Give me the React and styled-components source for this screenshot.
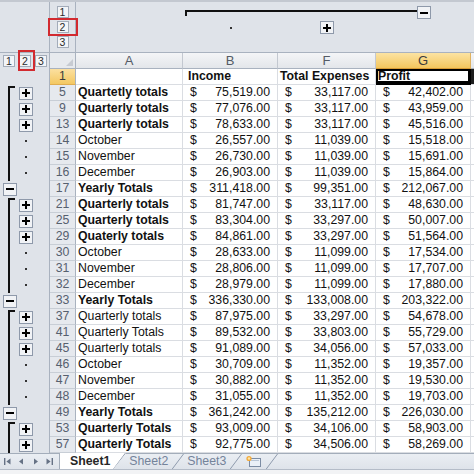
import React from 'react';
import styled, { createGlobalStyle, css } from 'styled-components';

const GlobalStyle = createGlobalStyle`
  html, body { margin: 0; padding: 0; background: #ffffff; }
  body { font-family: "Liberation Sans", Arial, sans-serif; }
`;

// gutter | row head | A | B | F | G | rest
const COLS = '50px 26px 107px 95px 98px 95px 1fr';

const GRID = '#dadde2';
const FRAME = '#a9b2bf';
const PANEL = '#dfe3e9';

const rows = [
  { n: 5, a: 'Quartetly totals', bold: true, b: '75,519.00', f: '33,117.00', g: '42,402.00', l1: 'start', l2: 'plus' },
  { n: 9, a: 'Quarterly totals', bold: true, b: '77,076.00', f: '33,117.00', g: '43,959.00', l1: 'line', l2: 'plus' },
  { n: 13, a: 'Quarterly totals', bold: true, b: '78,633.00', f: '33,117.00', g: '45,516.00', l1: 'line', l2: 'plus' },
  { n: 14, a: 'October', b: '26,557.00', f: '11,039.00', g: '15,518.00', l1: 'line', l2: 'dot' },
  { n: 15, a: 'November', b: '26,730.00', f: '11,039.00', g: '15,691.00', l1: 'line', l2: 'dot' },
  { n: 16, a: 'December', b: '26,903.00', f: '11,039.00', g: '15,864.00', l1: 'line', l2: 'dot' },
  { n: 17, a: 'Yearly Totals', bold: true, b: '311,418.00', f: '99,351.00', g: '212,067.00', l1: 'minus' },
  { n: 21, a: 'Quarterly totals', bold: true, b: '81,747.00', f: '33,117.00', g: '48,630.00', l1: 'start', l2: 'plus' },
  { n: 25, a: 'Quarterly totals', bold: true, b: '83,304.00', f: '33,297.00', g: '50,007.00', l1: 'line', l2: 'plus' },
  { n: 29, a: 'Quaterly totals', bold: true, b: '84,861.00', f: '33,297.00', g: '51,564.00', l1: 'line', l2: 'plus' },
  { n: 30, a: 'October', b: '28,633.00', f: '11,099.00', g: '17,534.00', l1: 'line', l2: 'dot' },
  { n: 31, a: 'November', b: '28,806.00', f: '11,099.00', g: '17,707.00', l1: 'line', l2: 'dot' },
  { n: 32, a: 'December', b: '28,979.00', f: '11,099.00', g: '17,880.00', l1: 'line', l2: 'dot' },
  { n: 33, a: 'Yearly Totals', bold: true, b: '336,330.00', f: '133,008.00', g: '203,322.00', l1: 'minus' },
  { n: 37, a: 'Quarterly totals', b: '87,975.00', f: '33,297.00', g: '54,678.00', l1: 'start', l2: 'plus' },
  { n: 41, a: 'Quarterly Totals', b: '89,532.00', f: '33,803.00', g: '55,729.00', l1: 'line', l2: 'plus' },
  { n: 45, a: 'Quarterly totals', b: '91,089.00', f: '34,056.00', g: '57,033.00', l1: 'line', l2: 'plus' },
  { n: 46, a: 'October', b: '30,709.00', f: '11,352.00', g: '19,357.00', l1: 'line', l2: 'dot' },
  { n: 47, a: 'November', b: '30,882.00', f: '11,352.00', g: '19,530.00', l1: 'line', l2: 'dot' },
  { n: 48, a: 'December', b: '31,055.00', f: '11,352.00', g: '19,703.00', l1: 'line', l2: 'dot' },
  { n: 49, a: 'Yearly Totals', bold: true, b: '361,242.00', f: '135,212.00', g: '226,030.00', l1: 'minus' },
  { n: 53, a: 'Quarterly Totals', bold: true, b: '93,009.00', f: '34,106.00', g: '58,903.00', l1: 'start', l2: 'plus' },
  { n: 57, a: 'Quarterly Totals', bold: true, b: '92,775.00', f: '34,506.00', g: '58,269.00', l1: 'line', l2: 'plus' }
];

const Screen = styled.div`
  width: 474px;
  height: 474px;
  overflow: hidden;
  display: flex;
  flex-direction: column;
  background: #fff;
`;

// top outline band (column groups)
const TopBand = styled.div`
  flex: none;
  display: grid;
  grid-template-columns: ${COLS};
  height: 53px;
  box-sizing: border-box;
  background: ${PANEL};
  border-top: 2px solid #c3c8d0;
  border-bottom: 1px solid ${FRAME};
`;

const BandCorner = styled.div`
  border-right: 1px solid ${FRAME};
`;

const LevelStack = styled.div`
  display: flex;
  flex-direction: column;
  align-items: center;
  padding-top: 4px;
  gap: 3px;
  border-right: 1px solid ${FRAME};
`;

const OutlineCol = styled.div`
  display: flex;
  flex-direction: column;
  padding-top: 3px;
`;

const Slot = styled.div`
  height: 15px;
  display: flex;
  align-items: center;
  justify-content: center;
`;

const HBar = styled.span`
  align-self: flex-start;
  flex: 1;
  height: 2px;
  margin-top: 5px;
  margin-left: ${(p) => (p.$hook ? '2px' : '0')};
  background: #111;
  position: relative;
  ${(p) =>
    p.$hook &&
    css`
      &::after {
        content: '';
        position: absolute;
        left: 0;
        top: 0;
        width: 2px;
        height: 6px;
        background: #111;
      }
    `}
`;

const Spacer = styled.span`
  flex: 1;
`;

const LevelBtn = styled.span`
  width: 12px;
  height: 12px;
  box-sizing: border-box;
  border: 1px solid #a3acb9;
  background: #f3f5f8;
  color: #2b2b2b;
  font-size: 10.5px;
  line-height: 10px;
  display: flex;
  align-items: center;
  justify-content: center;
  align-self: center;
  position: relative;
  ${(p) =>
    p.$mark === 'v' &&
    css`
      &::after {
        content: '';
        position: absolute;
        inset: -4px -10px -4px -10px;
        border: 2px solid #d22a2f;
        z-index: 3;
      }
    `}
  ${(p) =>
    p.$mark === 'h' &&
    css`
      &::after {
        content: '';
        position: absolute;
        inset: -6px -5px -5px -2px;
        border: 2px solid #d22a2f;
        z-index: 3;
      }
    `}
`;

const OutlineBtn = styled.span`
  width: 14px;
  height: 13px;
  box-sizing: border-box;
  border: 1px solid #8e99aa;
  background: #f1f3f6;
  display: grid;
  place-items: center;
  flex: none;
  &::before {
    content: '';
    grid-area: 1 / 1;
    width: 8px;
    height: 2px;
    background: #000;
  }
  &::after {
    content: '';
    grid-area: 1 / 1;
    width: 2px;
    height: 8px;
    background: #000;
    display: ${(p) => (p.$kind === 'plus' ? 'block' : 'none')};
  }
`;

const Dot = styled.span`
  width: 2px;
  height: 2px;
  background: #333;
`;

// left outline gutter (row groups)
const Gutter = styled.div`
  display: grid;
  grid-template-columns: 16px 16px 1fr;
  padding-left: ${(p) => (p.$tight ? '1px' : '2px')};
  box-sizing: border-box;
  background: ${PANEL};
  border-right: 1px solid ${FRAME};
`;

const GSlot = styled.div`
  display: flex;
  align-items: center;
  justify-content: center;
`;

const Bracket = styled.span`
  align-self: stretch;
  margin-left: 6px;
  margin-right: auto;
  margin-top: ${(p) => (p.$start ? '1px' : '0')};
  width: 2px;
  background: #111;
  position: relative;
  ${(p) =>
    p.$start &&
    css`
      &::after {
        content: '';
        position: absolute;
        left: 0;
        top: 0;
        width: 7px;
        height: 2px;
        background: #111;
      }
    `}
`;

const Row = styled.div`
  flex: none;
  display: grid;
  grid-template-columns: ${COLS};
  height: 16px;
`;

const SelectAll = styled.div`
  display: flex;
  align-items: flex-end;
  justify-content: flex-end;
  padding: 0 2px 2px 0;
  box-sizing: border-box;
  background: #e7eaee;
  border-right: 1px solid ${FRAME};
  border-bottom: 1px solid ${FRAME};
  &::after {
    content: '';
    border-left: 7px solid transparent;
    border-bottom: 7px solid #c7cbd2;
  }
`;

const ColHead = styled.div`
  box-sizing: border-box;
  text-align: center;
  font-size: 13px;
  line-height: 15px;
  color: #545b66;
  background: linear-gradient(#f4f5f7, #e3e6ea);
  border-right: 1px solid #c3c8d0;
  border-bottom: 1px solid ${FRAME};
  ${(p) =>
    p.$sel &&
    css`
      color: #3b3b3b;
      background: linear-gradient(#fbe3a2, #f4c65e);
      border-bottom-color: #d99c35;
      border-right-color: #e0b260;
    `}
`;

const RowHead = styled.div`
  box-sizing: border-box;
  text-align: center;
  font-size: 12.3px;
  line-height: 15px;
  color: #56606e;
  background: #e6e9ee;
  border-right: 1px solid ${FRAME};
  border-bottom: 1px solid #c8ced6;
  ${(p) =>
    p.$sel &&
    css`
      color: #3b3b3b;
      background: linear-gradient(#fbe0a0, #f4c862);
      border-bottom-color: #e0ad50;
    `}
`;

const Cell = styled.div`
  box-sizing: border-box;
  font-size: 12.3px;
  line-height: 15px;
  color: #111;
  padding: 0 2px 0 ${(p) => p.$indent || 2}px;
  white-space: nowrap;
  overflow: hidden;
  font-weight: ${(p) => (p.$bold ? 700 : 400)};
  border-right: 1px solid ${GRID};
  border-bottom: 1px solid ${GRID};
  ${(p) =>
    p.$active &&
    css`
      box-shadow: inset 0 0 0 2px #000;
      border-right-color: #000;
      border-bottom: 2px solid #000;
    `}
`;

const Money = styled(Cell)`
  display: flex;
  justify-content: space-between;
  padding: 0 7px;
`;

const Tail = styled.div`
  box-sizing: border-box;
  border-bottom: 1px solid ${GRID};
  background: ${(p) => (p.$dark ? '#1d1d1d' : '#fff')};
`;

const TailHead = styled.div`
  background: linear-gradient(#f4f5f7, #e3e6ea);
  border-bottom: 1px solid ${FRAME};
`;

// sheet tabs
const TabBar = styled.div`
  flex: none;
  height: 16px;
  box-sizing: border-box;
  display: flex;
  align-items: stretch;
  background: linear-gradient(#eaeef3, #dee3ea);
  border-top: 1px solid #a3adba;
`;

const NavGroup = styled.div`
  width: 60px;
  flex: none;
  box-sizing: border-box;
  display: flex;
  align-items: center;
  justify-content: space-around;
  padding: 0 3px 0 1px;
  border-right: 1px solid #a3adba;
  color: #667285;
`;

const Tab = styled.div`
  display: flex;
  align-items: stretch;
  padding-left: ${(p) => (p.$first ? 10 : 3)}px;
  font-size: 12.3px;
  line-height: 15px;
  color: ${(p) => (p.$active ? '#262626' : '#74839a')};
  font-weight: ${(p) => (p.$active ? 700 : 400)};
  ${(p) =>
    p.$active &&
    css`
      background: #fff;
      margin-top: -1px;
      clip-path: polygon(0 0, 100% 0, calc(100% - 13px) 100%, 0 100%);
    `}
`;

const TabLabel = styled.span`
  padding-right: 3px;
  display: flex;
  align-items: center;
`;

const StatusStrip = styled.div`
  flex: 1;
  background: #f2f3f5;
  border-top: 1px solid #b4bcc8;
`;

const Slash = () => (
  <svg width="13" height="16" viewBox="0 0 13 16">
    <line x1="0.5" y1="16" x2="12.5" y2="0" stroke="#8f9bad" strokeWidth="1" />
  </svg>
);

const NavIcon = ({ kind }) => (
  <svg width="7" height="7" viewBox="0 0 7 7" fill="currentColor">
    {kind === 'first' && (
      <>
        <rect x="0" y="0" width="1.4" height="7" />
        <path d="M6.5 0.5 L2.4 3.5 L6.5 6.5Z" />
      </>
    )}
    {kind === 'prev' && <path d="M5 0.5 L1 3.5 L5 6.5Z" />}
    {kind === 'next' && <path d="M2 0.5 L6 3.5 L2 6.5Z" />}
    {kind === 'last' && (
      <>
        <path d="M0.5 0.5 L4.6 3.5 L0.5 6.5Z" />
        <rect x="5.6" y="0" width="1.4" height="7" />
      </>
    )}
  </svg>
);

const InsertSheetIcon = () => (
  <svg width="17" height="13" viewBox="0 0 17 13">
    <rect x="4.5" y="3.5" width="11" height="8" fill="#eaf0f7" stroke="#7c8ca3" />
    <rect x="6" y="5" width="8" height="1" fill="#b9c6d6" />
    <circle cx="4" cy="3.5" r="2.6" fill="#f2a93b" />
    <circle cx="4" cy="3.5" r="1.2" fill="#fde7a8" />
  </svg>
);

const Gut = ({ l1, l2 }) => (
  <Gutter>
    <GSlot>
      {(l1 === 'start' || l1 === 'line') && <Bracket $start={l1 === 'start'} />}
      {l1 === 'minus' && <OutlineBtn $kind="minus" />}
    </GSlot>
    <GSlot>
      {l2 === 'plus' && <OutlineBtn $kind="plus" />}
      {l2 === 'dot' && <Dot />}
    </GSlot>
    <GSlot />
  </Gutter>
);

const App = () => {
  return (
    <>
      <GlobalStyle />
      <Screen>
        <TopBand>
          <BandCorner />
          <LevelStack>
            <LevelBtn>1</LevelBtn>
            <LevelBtn $mark="v">2</LevelBtn>
            <LevelBtn>3</LevelBtn>
          </LevelStack>
          <OutlineCol />
          <OutlineCol>
            <Slot>
              <HBar $hook />
            </Slot>
            <Slot>
              <Dot />
            </Slot>
          </OutlineCol>
          <OutlineCol>
            <Slot>
              <HBar />
            </Slot>
            <Slot>
              <OutlineBtn $kind="plus" />
            </Slot>
          </OutlineCol>
          <OutlineCol>
            <Slot>
              <HBar />
              <OutlineBtn $kind="minus" />
              <Spacer />
            </Slot>
          </OutlineCol>
          <OutlineCol />
        </TopBand>

        <Row>
          <Gutter $tight>
            <GSlot>
              <LevelBtn>1</LevelBtn>
            </GSlot>
            <GSlot>
              <LevelBtn $mark="h">2</LevelBtn>
            </GSlot>
            <GSlot>
              <LevelBtn>3</LevelBtn>
            </GSlot>
          </Gutter>
          <SelectAll />
          <ColHead>A</ColHead>
          <ColHead>B</ColHead>
          <ColHead>F</ColHead>
          <ColHead $sel>G</ColHead>
          <TailHead />
        </Row>

        <Row>
          <Gut />
          <RowHead $sel>1</RowHead>
          <Cell />
          <Cell $bold $indent={5}>
            Income
          </Cell>
          <Cell $bold>Total Expenses</Cell>
          <Cell $bold $active>
            Profit
          </Cell>
          <Tail $dark />
        </Row>

        {rows.map((r) => (
          <Row key={r.n}>
            <Gut l1={r.l1} l2={r.l2} />
            <RowHead>{r.n}</RowHead>
            <Cell $bold={r.bold}>{r.a}</Cell>
            <Money>
              <span>$</span>
              <span>{r.b}</span>
            </Money>
            <Money>
              <span>$</span>
              <span>{r.f}</span>
            </Money>
            <Money>
              <span>$</span>
              <span>{r.g}</span>
            </Money>
            <Tail />
          </Row>
        ))}

        <TabBar>
          <NavGroup>
            <NavIcon kind="first" />
            <NavIcon kind="prev" />
            <NavIcon kind="next" />
            <NavIcon kind="last" />
          </NavGroup>
          <Tab $first $active>
            <TabLabel>Sheet1</TabLabel>
            <Slash />
          </Tab>
          <Tab>
            <TabLabel>Sheet2</TabLabel>
            <Slash />
          </Tab>
          <Tab>
            <TabLabel>Sheet3</TabLabel>
            <Slash />
          </Tab>
          <Tab>
            <TabLabel>
              <InsertSheetIcon />
            </TabLabel>
            <Slash />
          </Tab>
        </TabBar>
        <StatusStrip />
      </Screen>
    </>
  );
};

export default App;
